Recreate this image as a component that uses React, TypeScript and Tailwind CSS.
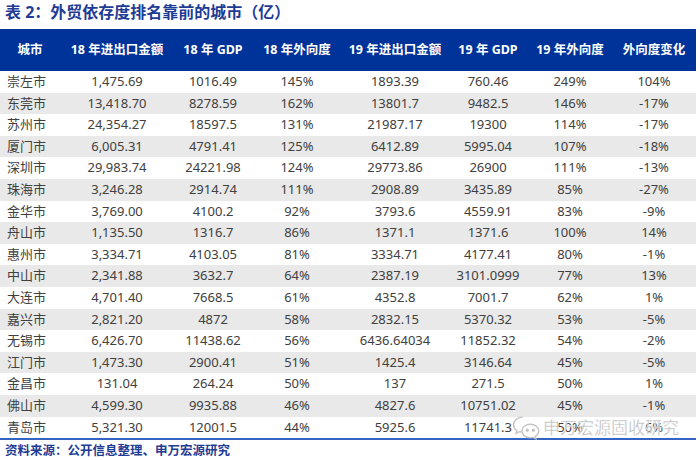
const rows: string[][] = [
  ["崇左市", "1,475.69", "1016.49", "145%", "1893.39", "760.46", "249%", "104%"],
  ["东莞市", "13,418.70", "8278.59", "162%", "13801.7", "9482.5", "146%", "-17%"],
  ["苏州市", "24,354.27", "18597.5", "131%", "21987.17", "19300", "114%", "-17%"],
  ["厦门市", "6,005.31", "4791.41", "125%", "6412.89", "5995.04", "107%", "-18%"],
  ["深圳市", "29,983.74", "24221.98", "124%", "29773.86", "26900", "111%", "-13%"],
  ["珠海市", "3,246.28", "2914.74", "111%", "2908.89", "3435.89", "85%", "-27%"],
  ["金华市", "3,769.00", "4100.2", "92%", "3793.6", "4559.91", "83%", "-9%"],
  ["舟山市", "1,135.50", "1316.7", "86%", "1371.1", "1371.6", "100%", "14%"],
  ["惠州市", "3,334.71", "4103.05", "81%", "3334.71", "4177.41", "80%", "-1%"],
  ["中山市", "2,341.88", "3632.7", "64%", "2387.19", "3101.0999", "77%", "13%"],
  ["大连市", "4,701.40", "7668.5", "61%", "4352.8", "7001.7", "62%", "1%"],
  ["嘉兴市", "2,821.20", "4872", "58%", "2832.15", "5370.32", "53%", "-5%"],
  ["无锡市", "6,426.70", "11438.62", "56%", "6436.64034", "11852.32", "54%", "-2%"],
  ["江门市", "1,473.30", "2900.41", "51%", "1425.4", "3146.64", "45%", "-5%"],
  ["金昌市", "131.04", "264.24", "50%", "137", "271.5", "50%", "1%"],
  ["佛山市", "4,599.30", "9935.88", "46%", "4827.6", "10751.02", "45%", "-1%"],
  ["青岛市", "5,321.30", "12001.5", "44%", "5925.6", "11741.3", "50%", "6%"],
];

const headers = ["城市", "18 年进出口金额", "18 年 GDP", "18 年外向度", "19 年进出口金额", "19 年 GDP", "19 年外向度", "外向度变化"];

const cols = "grid grid-cols-[60px_114px_78px_90px_106px_80px_84px_84px]";

function WeChatIcon() {
  return (
    <svg width="30" height="26" viewBox="0 0 26 24" fill="none" stroke="#c4c4c4" strokeWidth="1.3">
      <path d="M10 2C5 2 1.5 5.2 1.5 9c0 2.2 1.2 4.1 3 5.4L3.8 17l3-1.6c1 .3 2 .4 3.2.4" />
      <path d="M17 8.5c-4.4 0-7.8 2.8-7.8 6.3s3.4 6.3 7.8 6.3c.9 0 1.8-.1 2.6-.4l2.6 1.4-.6-2.3c1.9-1.2 3.2-3 3.2-5 0-3.5-3.4-6.3-7.8-6.3z" />
      <circle cx="14.2" cy="14" r="0.9" fill="#c4c4c4" />
      <circle cx="19.8" cy="14" r="0.9" fill="#c4c4c4" />
    </svg>
  );
}

export default function App() {
  return (
    <div
      className="relative w-[700px] h-[460px] bg-white overflow-hidden"
      style={{ fontFamily: '"Noto Sans", "Noto Sans CJK SC", sans-serif' }}
    >
      {/* Title */}
      <div className="h-[29px] pl-[5px] pt-[1px] text-[16px] font-bold text-[#1f3c95] leading-[22px] whitespace-nowrap">
        表 2：外贸依存度排名靠前的城市（亿）
      </div>

      {/* Table */}
      <div className="w-[696px]">
        <div className={`${cols} h-[42px] bg-[#003399] text-white text-[12.5px] font-bold items-center`}>
          {headers.map((h) => (
            <div key={h} className="text-center whitespace-nowrap">
              {h}
            </div>
          ))}
        </div>
        {rows.map((r, i) => (
          <div
            key={r[0]}
            className={`${cols} h-[21.6px] items-center text-[13px] text-[#404040] ${i % 2 === 1 ? "bg-[#e9e9e9]" : "bg-white"}`}
          >
            {r.map((c, j) => (
              <div key={j} className={j === 0 ? "pl-[7px] whitespace-nowrap" : "text-center whitespace-nowrap"}>
                {c}
              </div>
            ))}
          </div>
        ))}
        <div className="h-[2px] bg-[#3563c4]" />
      </div>

      {/* Source */}
      <div className="pl-[5px] pt-[1px] text-[12.5px] font-bold text-[#1f3c95] leading-[20px] whitespace-nowrap">
        资料来源：公开信息整理、申万宏源研究
      </div>

      {/* Watermark */}
      <div className="absolute left-[511px] top-[415px] flex items-center gap-[2px] whitespace-nowrap">
        <WeChatIcon />
        <span
          className="text-[17px] leading-[24px] text-[#bdbdbd]"
          style={{ WebkitTextStroke: "0.3px #ffffff" }}
        >
          申万宏源固收研究
        </span>
      </div>
    </div>
  );
}
